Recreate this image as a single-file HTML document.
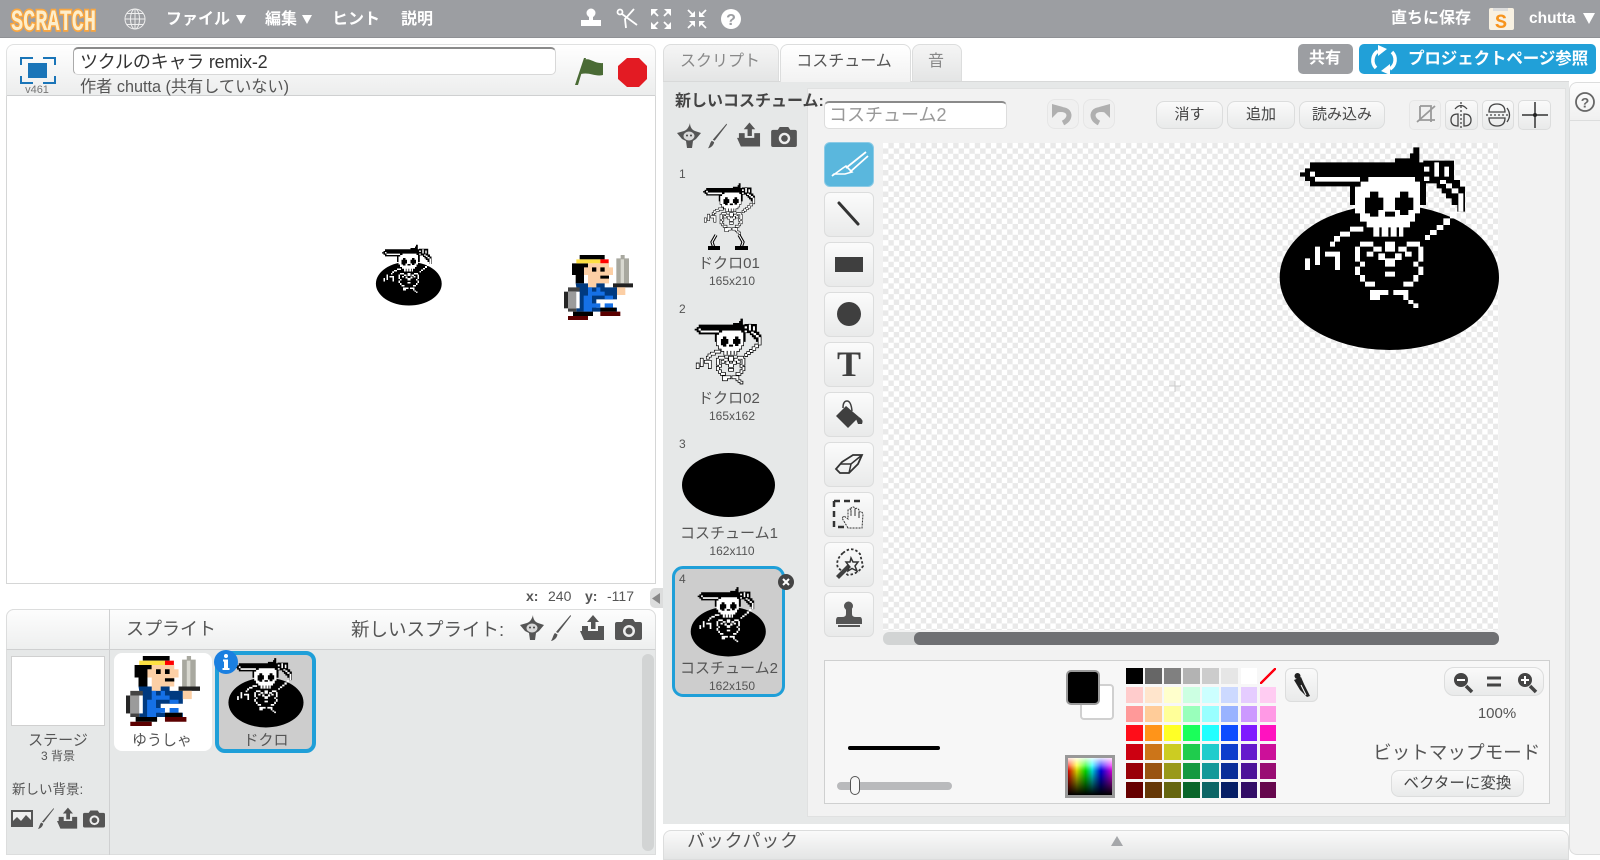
<!DOCTYPE html>
<html lang="ja"><head><meta charset="utf-8"><title>Scratch</title>
<style>
html,body{margin:0;padding:0;background:#fff}
body{width:1600px;height:855px;overflow:hidden;position:relative;font-family:"Liberation Sans","Noto Sans CJK JP",sans-serif;color:#555}
.a{position:absolute;box-sizing:border-box}
.t{position:absolute;white-space:nowrap;line-height:20px}
.c{transform:translateX(-50%)}
.b{font-weight:bold;color:#fff}
.btn{position:absolute;box-sizing:border-box;background:linear-gradient(#fafafa,#e9eaea);border:1px solid #dcdddd;border-radius:8px;text-align:center;color:#444}
.tool{position:absolute;left:824px;width:50px;height:45px;box-sizing:border-box;background:linear-gradient(#fbfbfb,#e9eaea);border:1px solid #dcdddd;border-radius:6px}
.grid{position:absolute;left:1126px;top:668px;display:grid;grid-template-columns:repeat(8,16.5px);grid-auto-rows:16px;column-gap:2.6px;row-gap:3px}
.grid i{display:block}
svg{position:absolute;left:0;top:0}
</style></head><body>

<!-- top bar -->
<div class="a" style="left:0;top:0;width:1600px;height:38px;background:#9c9ea2;border-bottom:1px solid #8f9195"></div>

<!-- stage panel -->
<div class="a" style="left:6px;top:44px;width:650px;height:53px;background:linear-gradient(#fff,#eceded);border:1px solid #e0e1e1;border-bottom:2px solid #cfd0d1;border-radius:8px 8px 0 0"></div>
<div class="a" style="left:73px;top:47px;width:483px;height:28px;background:#fff;border:1px solid #d8d8d8;border-top:2px solid #8a8a8a;border-left:1px solid #aaa;border-radius:5px"></div>
<div class="a" style="left:6px;top:96px;width:650px;height:488px;background:#fff;border:1px solid #d5d6d6;border-top:none"></div>

<!-- sprite panel -->
<div class="a" style="left:6px;top:609px;width:650px;height:246px;background:#e6e8e8;border:1px solid #dcdddd;border-radius:8px 8px 0 0"></div>
<div class="a" style="left:6px;top:609px;width:650px;height:41px;background:linear-gradient(#fdfdfd,#eeefef);border:1px solid #dcdddd;border-bottom:1px solid #cfd0d1;border-radius:8px 8px 0 0"></div>
<div class="a" style="left:109px;top:609px;width:1px;height:246px;background:#cfd0d1"></div>
<div class="a" style="left:11px;top:656px;width:94px;height:70px;background:#fff;border:1px solid #d0d0d0"></div>
<div class="a" style="left:114px;top:653px;width:98px;height:98px;background:#fff;border-radius:8px"></div>
<div class="a" style="left:215px;top:651px;width:101px;height:102px;background:#cdcdcd;border:4px solid #1f9fd8;border-radius:10px"></div>
<div class="a" style="left:642px;top:654px;width:12px;height:197px;background:#d2d4d4;border-radius:6px"></div>

<!-- collapse tab -->
<div class="a" style="left:650px;top:588px;width:13px;height:20px;background:#dcdddd;border-radius:5px 0 0 5px"></div>

<!-- tabs -->
<div class="a" style="left:663px;top:44px;width:116px;height:38px;background:linear-gradient(#f5f5f5,#e4e5e5);border:1px solid #dcdddd;border-radius:8px 8px 0 0"></div>
<div class="a" style="left:780px;top:44px;width:131px;height:38px;background:linear-gradient(#fff,#f2f2f2);border:1px solid #dcdddd;border-bottom:none;border-radius:8px 8px 0 0;z-index:2"></div>
<div class="a" style="left:912px;top:44px;width:50px;height:38px;background:linear-gradient(#f5f5f5,#e4e5e5);border:1px solid #dcdddd;border-radius:8px 8px 0 0"></div>

<!-- share buttons -->
<div class="a" style="left:1298px;top:44px;width:55px;height:30px;background:#9c9ea2;border-radius:5px"></div>
<div class="a" style="left:1359px;top:44px;width:237px;height:30px;background:#21a0d8;border-radius:5px"></div>

<!-- pane -->
<div class="a" style="left:663px;top:81px;width:906px;height:743px;background:#e6e8e8;border-top:1px solid #d8d9d9"></div>
<div class="a" style="left:807px;top:88px;width:759px;height:729px;background:#f2f2f2;border:1px solid #e0e1e1"></div>
<div class="a" style="left:672px;top:566px;width:113px;height:131px;background:#cdcdcd;border:3.5px solid #1f9fd8;border-radius:11px"></div>

<!-- help panel -->
<div class="a" style="left:1569px;top:120px;width:31px;height:735px;background:#f2f2f2;border:1px solid #dcdddd;border-right:none;border-radius:0 0 0 8px"></div>
<div class="a" style="left:1569px;top:82px;width:31px;height:39px;background:linear-gradient(#fdfdfd,#f0f0f0);border:1px solid #dcdddd;border-right:none;border-radius:8px 0 0 0"></div>

<!-- backpack -->
<div class="a" style="left:663px;top:830px;width:906px;height:30px;background:linear-gradient(#fafafa,#e4e5e5);border:1px solid #dcdddd;border-radius:8px 8px 0 0"></div>

<!-- costume name -->
<div class="a" style="left:824px;top:101px;width:183px;height:28px;background:#fff;border:1px solid #ddd;border-top:2px solid #8a8a8a;border-radius:5px"></div>

<!-- action buttons -->
<div class="btn" style="left:1047px;top:99px;width:32px;height:30px;background:#f0f0f0;border-color:#e6e6e6"></div>
<div class="btn" style="left:1083px;top:99px;width:32px;height:30px;background:#f0f0f0;border-color:#e6e6e6"></div>
<div class="btn" style="left:1156px;top:101px;width:67px;height:28px;font-size:15px;line-height:26px">消す</div>
<div class="btn" style="left:1227px;top:101px;width:68px;height:28px;font-size:15px;line-height:26px">追加</div>
<div class="btn" style="left:1299px;top:101px;width:86px;height:28px;font-size:15px;line-height:26px">読み込み</div>
<div class="btn" style="left:1409px;top:100px;width:32px;height:30px;border-radius:5px;background:#f0f0f0;border-color:#e6e6e6"></div>
<div class="btn" style="left:1445px;top:100px;width:33px;height:30px;border-radius:5px"></div>
<div class="btn" style="left:1482px;top:100px;width:32px;height:30px;border-radius:5px"></div>
<div class="btn" style="left:1518px;top:100px;width:33px;height:30px;border-radius:5px"></div>

<!-- tools -->
<div class="tool" style="top:142px;background:#5ab7dd;border-color:#8ccbe6"></div>
<div class="tool" style="top:192px"></div>
<div class="tool" style="top:242px"></div>
<div class="tool" style="top:292px"></div>
<div class="tool" style="top:342px"></div>
<div class="tool" style="top:392px"></div>
<div class="tool" style="top:442px"></div>
<div class="tool" style="top:492px"></div>
<div class="tool" style="top:542px"></div>
<div class="tool" style="top:592px"></div>

<!-- canvas -->
<div class="a" style="left:883px;top:143px;width:616px;height:487px;background:repeating-conic-gradient(#e9e9e9 0 25%,#fff 0 50%) 0 0/10.8px 10.8px"></div>
<div class="a" style="left:883px;top:632px;width:616px;height:13px;background:#d2d4d4;border-radius:6px"></div>
<div class="a" style="left:914px;top:632px;width:585px;height:13px;background:#6f7073;border-radius:6px"></div>

<!-- colour panel -->
<div class="a" style="left:824px;top:660px;width:726px;height:144px;background:#f7f7f7;border:1px solid #cfd0d0"></div>
<div class="a" style="left:848px;top:746px;width:92px;height:4px;background:#000;border-radius:2px"></div>
<div class="a" style="left:837px;top:782px;width:115px;height:8px;background:#b9babc;border-radius:4px"></div>
<div class="a" style="left:850px;top:776px;width:10px;height:19px;background:#f7f7f7;border:1px solid #555;border-radius:5px"></div>
<div class="a" style="left:1080px;top:684px;width:34px;height:36px;background:#fff;border:2px solid #d0d0d0;border-radius:4px"></div>
<div class="a" style="left:1066px;top:670px;width:34px;height:35px;background:#000;border:2px solid #9a9a9a;border-radius:5px"></div>
<div class="a" style="left:1065px;top:755px;width:50px;height:43px;border:3px solid #999;background:linear-gradient(rgba(0,0,0,0) 20%,#000 100%),linear-gradient(rgba(255,255,255,.9),rgba(255,255,255,0) 35%),linear-gradient(90deg,#f00,#ff0 20%,#0f0 40%,#0ff 55%,#00f 75%,#f0f)"></div>
<div class="grid">
<i style="background:#000"></i><i style="background:#666"></i><i style="background:#808080"></i><i style="background:#b3b3b3"></i><i style="background:#ccc"></i><i style="background:#e6e6e6"></i><i style="background:#fff"></i><i style="background:linear-gradient(to top left,transparent 44%,#f01 44%,#f01 56%,transparent 56%)"></i>
<i style="background:#ffcccc"></i><i style="background:#ffe5cc"></i><i style="background:#ffffcc"></i><i style="background:#ccffe2"></i><i style="background:#ccffff"></i><i style="background:#ccd9ff"></i><i style="background:#e5ccff"></i><i style="background:#ffccf2"></i>
<i style="background:#ff9999"></i><i style="background:#ffcc99"></i><i style="background:#ffff99"></i><i style="background:#99ffbb"></i><i style="background:#99ffff"></i><i style="background:#99b3ff"></i><i style="background:#cc99ff"></i><i style="background:#ff99e5"></i>
<i style="background:#ff0d19"></i><i style="background:#ff9419"></i><i style="background:#ffff26"></i><i style="background:#1aff5a"></i><i style="background:#22ffff"></i><i style="background:#0d4cff"></i><i style="background:#7f1aff"></i><i style="background:#ff12bf"></i>
<i style="background:#cc0011"></i><i style="background:#cc7519"></i><i style="background:#cccc22"></i><i style="background:#1fcc4d"></i><i style="background:#1fcccc"></i><i style="background:#0d3dcc"></i><i style="background:#661acc"></i><i style="background:#cc1099"></i>
<i style="background:#990008"></i><i style="background:#995411"></i><i style="background:#99991a"></i><i style="background:#149940"></i><i style="background:#149999"></i><i style="background:#0a2e99"></i><i style="background:#4d1399"></i><i style="background:#990d73"></i>
<i style="background:#660000"></i><i style="background:#663807"></i><i style="background:#66660f"></i><i style="background:#0a662a"></i><i style="background:#0d6666"></i><i style="background:#061f66"></i><i style="background:#330d66"></i><i style="background:#66084d"></i>
</div>
<div class="btn" style="left:1285px;top:668px;width:33px;height:34px;border-radius:6px"></div>
<div class="btn" style="left:1444px;top:667px;width:100px;height:29px;border-radius:10px"></div>
<div class="btn" style="left:1391px;top:770px;width:133px;height:27px;font-size:15.500px;line-height:25px">ベクターに変換</div>

<svg width="1600" height="855" viewBox="0 0 1600 855" style="z-index:3">
<defs>
<g id="skb">
<path d="M150 97H405V85H450V70H460V52H478V97H498V225H480V170H285V225H270V169H150V153H135V140H120V127H135V115H150Z"/>
<path d="M490 92H582V150H600V170H615V245H592V225H575V205H558V190H545V175H530V160H490Z"/>
</g>
<g id="skw">
<path d="M325 141H465V155H480V250H465V275H450V292H430V320H340V292H320V275H300V250H285V173H302V155H325Z"/>
<path d="M150 125H165V141H300V155H165V140H150Z"/>
<path d="M310 290V305H270V320H240V335H225V350H210V335H222V318H240V305H270V290Z"/>
<path d="M135 385h15v35h-15zM165 350h15v55h-15zM195 365h45v55h-15v-40h-30z"/>
<path d="M285 350h15v45h-15zM300 335h40v15h-40zM440 335h40v15h-40zM475 350h15v45h-15zM300 395h15v15h-15zM460 395h15v15h-15zM375 335h30v30h-30zM340 350h25v15h-25zM415 350h25v15h-25zM355 370h20v20h-20zM405 370h20v20h-20zM375 385h30v25h-30zM320 365h20v15h-20zM435 365h20v15h-20z"/>
<path d="M285 410h15v25h-15zM475 410h15v25h-15zM300 435h15v20h-15zM460 435h15v20h-15zM315 455h30v15h-30zM430 455h30v15h-30zM375 425h30v15h-30z"/>
<path d="M330 480h55v15h-25v15h-30zM400 480h45v30h-15v-15h-30zM445 510h15v12h-15zM460 520h15v14h-15z"/>
<path d="M495 315h15v15h-15zM510 300h20v15h-20zM530 285h20v15h-20zM550 265h20v20h-20zM570 245h20v20h-20zM595 190h15v55h-15zM575 175h20v15h-20zM558 160h18v15h-18zM540 150h18v12h-18zM492 110h16v15h-16zM492 140h16v13h-16zM523 97h14v43h-14zM553 110h14v30h-14z"/>
</g>
<g id="ske" fill="#000">
<path d="M330 185H355V203H370V240H355V260H330V250H315V203H330ZM420 185H445V203H460V240H445V255H420V240H405V203H420ZM375 245H405V260H375ZM358 292h7v28h-7zM385 292h7v28h-7zM410 292h7v28h-7z"/>
</g>
<symbol id="bomb" viewBox="0 0 780 690" overflow="visible">
<ellipse cx="388" cy="442" rx="329" ry="218" fill="#000"/>
<use href="#skb" fill="#000"/>
<use href="#skw" fill="#fff"/>
<use href="#ske"/>
</symbol>
<symbol id="skel" viewBox="110 40 515 505" overflow="visible">
<use href="#skb" fill="#000"/>
<use href="#skw" fill="#fff" stroke="#000" stroke-width="12" style="paint-order:stroke"/>
<use href="#skw" fill="#fff"/>
<use href="#ske"/>
</symbol>
<symbol id="hero" viewBox="613 75 207 195" preserveAspectRatio="none">
<path fill="#000" d="M660 75H735V88H660ZM637 100H685V135H673V160H648V135H637Z"/>
<path fill="#fde043" d="M650 88H722V100H650Z"/>
<path fill="#f00" d="M722 88H747V100H722Z"/>
<path fill="#fccfa5" d="M685 100H748V112H760V135H748V160H710V172H685V135H673V112H685Z"/>
<path fill="#000" d="M697 112H710V125H697ZM722 112H735V125H722ZM735 137H748V146H722V137Z"/>
<path fill="#003a80" d="M648 160H685V172H710V160H735V172H772V208H710V233H772V245H650V172Z"/>
<path fill="#1570e6" d="M685 172H697V185H710V172H722V185H735V197H697V208H672V197H685ZM672 208H697V220H722V233H697V245H672ZM735 197H760V208H735ZM735 220H760V233H735Z"/>
<path fill="#000" d="M640 245H700V258H640ZM722 233H770V245H722Z"/>
<path fill="#000" opacity=".85" d="M613 185H625V235H613Z"/>
<path fill="#444" d="M625 172H660V185H625ZM625 235H650V245H625Z"/>
<path fill="#9b9b9b" d="M625 185H650V235H625Z"/>
<path fill="#fff" d="M650 185H660V235H650Z"/>
<path fill="#a8a89f" d="M783 75H795V85H808V160H770V85H783Z"/>
<path fill="#d8d8d0" d="M783 88H793V160H783Z"/>
<path fill="#222" d="M760 160H820V172H760Z"/>
<path fill="#fccfa5" d="M772 172H797V195H772Z"/>
<path fill="#5c0000" d="M625 258H685V270H625ZM722 245H782V258H722Z"/>
</symbol>
<symbol id="lib" viewBox="0 0 24 26"><path fill="#555" d="M13 0C13 4 15 7 18 8L24 10L19 16L16 18L15 25H10L9 18L5 16L0 10L7 8C10 7 12 4 13 0Z"/><ellipse cx="12" cy="13" rx="5.5" ry="4.5" fill="#d8d8d8"/><circle cx="10" cy="12.5" r="1" fill="#444"/><circle cx="14" cy="12.5" r="1" fill="#444"/></symbol>
<symbol id="paint" viewBox="0 0 20 26"><path fill="#555" d="M19.500 0L20 1L7 18L5 17ZM4 18L6.500 19.500C6 23 3 25.500 0 26C2 23 2 20 4 18Z"/></symbol>
<symbol id="up" viewBox="0 0 25 26"><path fill="#555" d="M13 0L19 7H15.500V14H11V7H7ZM2 11H8V16H18V11H24V25H4L0 16H2Z"/></symbol>
<symbol id="cam" viewBox="0 0 27 21"><path fill="#555" d="M2 3H7L9 0H18L20 3H25Q27 3 27 5V19Q27 21 25 21H2Q0 21 0 19V5Q0 3 2 3Z"/><circle cx="14" cy="12" r="6" fill="#eee"/><circle cx="14" cy="12" r="3.500" fill="#555"/></symbol>
</defs>

<!-- logo -->
<text x="11" y="30" font-family="Liberation Mono,monospace" font-weight="bold" font-size="30" textLength="85" lengthAdjust="spacingAndGlyphs" fill="#fdeecb" stroke="#f9a640" stroke-width="3.500" style="paint-order:stroke">SCRATCH</text>

<!-- globe -->
<g fill="none" stroke="#eee" stroke-width="1"><circle cx="135" cy="19" r="10"/><ellipse cx="135" cy="19" rx="4.500" ry="10"/><path d="M125 19H145M127 13.500H143M127 24.500H143M135 9V29"/></g>

<!-- top triangles -->
<path fill="#fff" d="M236 15H246L241 24ZM302 15H312L307 24ZM1583 13H1595L1589 24Z"/>
<!-- top tools -->
<g fill="#fff">
<circle cx="591" cy="13" r="4.500"/><path d="M589 13H593V20H601V26H581V20H589Z"/>
</g>
<g fill="none" stroke="#fff" stroke-width="1.800">
<circle cx="620" cy="12" r="2.500"/><path d="M622 14L637 25M634 9L625 19L626 28"/>
<path d="M652 10L658 16M670 10L664 16M652 28L658 22M670 28L664 22"/>
<path d="M688 10L693 15M706 10L701 15M688 28L693 23M706 28L701 23"/>
</g>
<path fill="#fff" d="M651 9H658L651 16ZM671 9H664L671 16ZM651 29H658L651 22ZM671 29H664L671 22ZM695 17H689L695 11ZM699 17H705L699 11ZM695 21H689L695 27ZM699 21H705L699 27Z"/>
<circle cx="731" cy="19" r="10" fill="#fff"/>
<text x="731" y="25" text-anchor="middle" font-family="Liberation Sans,sans-serif" font-weight="bold" font-size="16" fill="#9c9ea2">?</text>
<!-- S bag -->
<rect x="1489" y="8" width="25" height="22" rx="2" fill="#f8f1e2"/><rect x="1493" y="8" width="15" height="3" fill="#ddd"/>
<text x="1501" y="28" text-anchor="middle" font-family="Liberation Mono,monospace" font-weight="bold" font-size="20" fill="#f7941d">S</text>

<!-- fullscreen -->
<rect x="28" y="63" width="19" height="15" fill="#1a75b8"/>
<path fill="none" stroke="#1a75b8" stroke-width="2" d="M21 65V58H33M55 65V58H43M21 76V83H33M55 76V83H43"/>
<!-- flag, stop -->
<path fill="#4a6b35" d="M575 85L584 58L586 58L578 85ZM584 60C590 57 594 64 603 63V75C595 77 590 72 581 74Z"/>
<path fill="#e31b23" d="M627 58H639L647 66V79L639 87H627L618 79V66Z"/>

<!-- xy arrow -->
<path fill="#888" d="M660 593V604L652 598.500Z"/>

<!-- stage sprites -->
<use href="#bomb" x="370" y="239.500" width="78" height="69"/>
<use href="#hero" x="564" y="255" width="69" height="65"/>

<!-- sprite icons -->
<use href="#lib" x="520" y="615" width="24" height="26"/>
<use href="#paint" x="551" y="615" width="20" height="26"/>
<use href="#up" x="580" y="615" width="25" height="26"/>
<use href="#cam" x="615" y="619" width="27" height="21"/>
<!-- backdrop icons -->
<path fill="#555" d="M11 810H33V827H11Z"/><path fill="#eee" d="M13 812H31V820L26 815L21 821L17 817L13 821Z"/>
<use href="#paint" x="38" y="806" width="16" height="25"/>
<use href="#up" x="57" y="806" width="21" height="25"/>
<use href="#cam" x="83" y="810" width="22" height="18"/>

<!-- sprite thumbs -->
<use href="#hero" x="126" y="656" width="74" height="70"/>
<use href="#bomb" x="221.700" y="652" width="89" height="79"/>
<circle cx="226" cy="662" r="12" fill="#1a7fe0"/>
<circle cx="226" cy="656" r="2" fill="#fff"/><path fill="#fff" d="M223 659.500H228V668H229.500V670H222.500V668H224V661.500H223Z"/>

<!-- costume icons -->
<use href="#lib" x="677" y="123" width="24" height="26"/>
<use href="#paint" x="708" y="123" width="19" height="26"/>
<use href="#up" x="737" y="122" width="24" height="26"/>
<use href="#cam" x="771" y="127" width="26" height="20"/>

<!-- costume thumbs -->
<use href="#skel" x="702" y="182" width="54" height="53"/>
<g fill="none" stroke="#000" stroke-width="3.200"><path d="M716 235L712 242L714 248M739 235L743 242L741 248"/></g>
<g fill="none" stroke="#fff" stroke-width="1.100"><path d="M716 235L712 242L714 248M739 235L743 242L741 248"/></g>
<path fill="#000" d="M708 246H720V250H708ZM735 246H748V250H735Z"/>
<use href="#skel" x="693" y="317" width="70" height="68"/>
<ellipse cx="728.500" cy="485" rx="46.500" ry="32" fill="#000"/>
<use href="#bomb" x="684" y="581" width="89" height="79"/>
<circle cx="786" cy="582" r="8" fill="#444"/>
<path stroke="#fff" stroke-width="2" d="M783 579L789 585M789 579L783 585"/>

<!-- tool icons -->
<g fill="none" stroke="#fff" stroke-width="1.800"><path d="M866 152L846 168M868 156L850 172"/><path stroke-width="1.600" d="M843 168L832 176L834 174H845L852 172L846 166Z"/></g>
<path stroke="#333" stroke-width="3" stroke-linecap="round" d="M839 203L858 224"/>
<rect x="835" y="257" width="28" height="15" fill="#3f3f3f"/>
<circle cx="849" cy="314" r="12" fill="#3f3f3f"/>
<text x="849" y="376" text-anchor="middle" font-family="Liberation Serif,serif" font-weight="bold" font-size="36" fill="#3f3f3f">T</text>
<path fill="#3f3f3f" d="M836 416L846 406L859 417L848 428Z"/><path fill="#3f3f3f" d="M859 417Q864 420 862 424L858 424L856 419Z"/><path fill="none" stroke="#3f3f3f" stroke-width="1.500" d="M843 408Q843 401 847 401Q851 401 852 411"/>
<path fill="none" stroke="#333" stroke-width="1.800" d="M842 462L853 455H862L858 464L849 473H840L836 469Z"/><path fill="none" stroke="#333" stroke-width="1.500" d="M840 464H851L862 455M851 464L849 473"/>
<path fill="none" stroke="#333" stroke-width="2.500" stroke-dasharray="6 4" d="M834 501H860M834 501V527H848"/>
<path fill="#f4f4f4" stroke="#333" stroke-width="1" stroke-dasharray="2 1" d="M848 528L842 518L844 516L848 519V510Q850 508 851 510V516V508Q853 506 855 508V516V509Q857 507 859 510V518V512Q862 511 863 514L862 528Z"/>
<path fill="none" stroke="#333" stroke-width="1.800" stroke-dasharray="2.500 2" d="M843 553Q852 545 860 554L863 566Q858 574 848 575L838 568Q835 560 843 553Z"/>
<path fill="#3f3f3f" d="M836 576L848 564L851 567L839 579Z"/><path fill="none" stroke="#333" stroke-width="1.500" d="M851 558L853 562H858L855 566L857 571L852 568.500L848 571L849 566L846 562H850Z"/>
<circle cx="848.500" cy="606" r="4.500" fill="#555"/><path fill="#555" d="M846 606H852V614Q852 617 856 617H860Q862 617 862 621V624H836V621Q836 617 838 617H842Q846 617 846 614ZM838 625H860V627H838Z"/>

<!-- undo redo -->
<g fill="none" stroke="#b0b0b0" stroke-width="5"><path d="M1056 110Q1068 108 1069 115Q1069 120 1063 123"/><path d="M1106 110Q1094 108 1093 115Q1093 120 1099 123"/></g>
<path fill="#b0b0b0" d="M1052 104V118L1063 107ZM1110 104V118L1099 107Z"/>

<!-- top-right editor icons -->
<g fill="none" stroke="#999" stroke-width="1.800"><path d="M1420 106V120H1435M1420 106H1431V122"/><path d="M1417 122L1435 106"/></g>
<g fill="none" stroke="#444" stroke-width="1.300"><path d="M1461 102V128" stroke-dasharray="2 2"/><path d="M1458 114Q1451 114 1451 120Q1451 126 1458 126ZM1464 114Q1471 114 1471 120Q1471 126 1464 126Z"/><path d="M1455 109Q1461 102 1467 109"/></g>
<g fill="none" stroke="#444" stroke-width="1.300"><path d="M1486 115H1508" stroke-dasharray="2 2"/><path d="M1489 112Q1489 104 1497 104Q1505 104 1505 112ZM1489 118Q1489 126 1497 126Q1505 126 1505 118Z"/><path d="M1507 108Q1512 115 1507 122"/></g>
<path stroke="#333" stroke-width="1.500" d="M1535 102V128M1522 115H1548"/><circle cx="1535" cy="115" r="2" fill="#222"/>

<!-- canvas bitmap -->
<path stroke="#ccc" stroke-width="1" d="M1175 381V392M1169 386H1181"/>
<use href="#bomb" x="1260" y="130" width="260" height="230"/>

<!-- dropper -->
<circle cx="1297.500" cy="676" r="3" fill="#222"/><path fill="#222" d="M1294 680L1301 677L1304 684L1310 696L1307 697L1300 690Z"/>
<path stroke="#fff" stroke-width="1" d="M1301 685L1306 695"/>

<!-- zoom icons -->
<circle cx="1461" cy="680" r="7" fill="#444"/><path stroke="#444" stroke-width="3.500" d="M1466 686L1472 692"/><path stroke="#fff" stroke-width="2" d="M1457 680H1465"/>
<path stroke="#444" stroke-width="3" d="M1487 678H1501M1487 685H1501"/>
<circle cx="1525" cy="680" r="7" fill="#444"/><path stroke="#444" stroke-width="3.500" d="M1530 686L1536 692"/><path stroke="#fff" stroke-width="2" d="M1521 680H1529M1525 676V684"/>

<!-- help ? -->
<circle cx="1585" cy="102" r="9" fill="none" stroke="#666" stroke-width="1.800"/>
<text x="1585" y="107.500" text-anchor="middle" font-family="Liberation Sans,sans-serif" font-weight="bold" font-size="14" fill="#666">?</text>

<!-- backpack triangle -->
<path fill="#a5a7aa" d="M1117 836L1123 846H1111Z"/>

<!-- share icon -->
<g fill="none" stroke="#fff" stroke-width="3.500"><path d="M1376 68A11 11 0 0 1 1378 51"/><path d="M1392 52A11 11 0 0 1 1390 69"/></g>
<path fill="#fff" d="M1387 49L1378 45V56ZM1381 71L1390 75V64Z"/>
</svg>

<div style="position:relative;z-index:4">
<div class="t b" style="left:166px;top:10px;font-size:16px">ファイル</div>
<div class="t b" style="left:265px;top:10px;font-size:16px">編集</div>
<div class="t b" style="left:332px;top:10px;font-size:16px">ヒント</div>
<div class="t b" style="left:401px;top:10px;font-size:16px">説明</div>
<div class="t b" style="left:1391px;top:9px;font-size:16px">直ちに保存</div>
<div class="t b" style="left:1529px;top:9px;font-size:15.500px">chutta</div>

<div class="t" style="left:80px;top:52px;font-size:18px;color:#333;letter-spacing:-.2px">ツクルのキャラ remix-2</div>
<div class="t" style="left:80px;top:77px;font-size:16.200px;color:#555">作者 chutta (共有していない)</div>
<div class="t c" style="left:37px;top:80px;font-size:11px;color:#777">v461</div>

<div class="t" style="left:526px;top:586px;font-size:14px;font-weight:bold;color:#555">x:</div>
<div class="t" style="left:548px;top:586px;font-size:14px;color:#555">240</div>
<div class="t" style="left:585px;top:586px;font-size:14px;font-weight:bold;color:#555">y:</div>
<div class="t" style="left:607px;top:586px;font-size:14px;color:#555">-117</div>

<div class="t" style="left:126px;top:619px;font-size:18px;color:#555">スプライト</div>
<div class="t" style="left:351px;top:620px;font-size:18.500px;color:#555">新しいスプライト:</div>
<div class="t c" style="left:58px;top:731px;font-size:15px">ステージ</div>
<div class="t c" style="left:58px;top:746px;font-size:12px">3 背景</div>
<div class="t" style="left:12px;top:780px;font-size:13.500px">新しい背景:</div>
<div class="t c" style="left:162px;top:731px;font-size:15px">ゆうしゃ</div>
<div class="t c" style="left:266px;top:731px;font-size:15px">ドクロ</div>

<div class="t c" style="left:720px;top:52px;font-size:16px;color:#888">スクリプト</div>
<div class="t c" style="left:844px;top:52px;font-size:16px;color:#555">コスチューム</div>
<div class="t c" style="left:936px;top:52px;font-size:16px;color:#888">音</div>
<div class="t c b" style="left:1325px;top:49px;font-size:16px">共有</div>
<div class="t b" style="left:1408px;top:49px;font-size:16.500px;letter-spacing:-.1px">プロジェクトページ参照</div>

<div class="t" style="left:675px;top:92px;font-size:16px;font-weight:bold;color:#444">新しいコスチューム:</div>
<div class="t" style="left:829px;top:105px;font-size:18px;color:#999">コスチューム2</div>

<div class="t" style="left:679px;top:164px;font-size:12px">1</div>
<div class="t c" style="left:729px;top:254px;font-size:15px">ドクロ01</div>
<div class="t c" style="left:732px;top:271px;font-size:12px">165x210</div>
<div class="t" style="left:679px;top:299px;font-size:12px">2</div>
<div class="t c" style="left:729px;top:389px;font-size:15px">ドクロ02</div>
<div class="t c" style="left:732px;top:406px;font-size:12px">165x162</div>
<div class="t" style="left:679px;top:434px;font-size:12px">3</div>
<div class="t c" style="left:729px;top:524px;font-size:15px">コスチューム1</div>
<div class="t c" style="left:732px;top:541px;font-size:12px">162x110</div>
<div class="t" style="left:679px;top:569px;font-size:12px">4</div>
<div class="t c" style="left:729px;top:659px;font-size:15px">コスチューム2</div>
<div class="t c" style="left:732px;top:676px;font-size:12px">162x150</div>

<div class="t c" style="left:1497px;top:704px;font-size:15px">100%</div>
<div class="t" style="left:1373px;top:743px;font-size:18.600px">ビットマップモード</div>
<div class="t" style="left:687px;top:831px;font-size:18px;letter-spacing:.8px">バックパック</div>
</div>
</body></html>
